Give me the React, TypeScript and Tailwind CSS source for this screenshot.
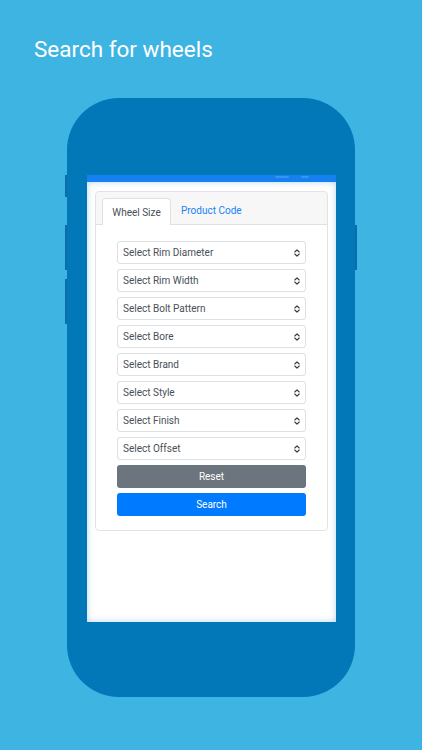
const selects = [
  "Select Rim Diameter",
  "Select Rim Width",
  "Select Bolt Pattern",
  "Select Bore",
  "Select Brand",
  "Select Style",
  "Select Finish",
  "Select Offset",
];

function UpDown() {
  return (
    <svg width="8" height="10" viewBox="0 0 8 10" fill="none" stroke="#343a40" strokeWidth="1.1" strokeLinecap="round" strokeLinejoin="round">
      <path d="M1.8 4 L4 1.8 L6.2 4" />
      <path d="M1.8 6 L4 8.2 L6.2 6" />
    </svg>
  );
}

function Phone() {
  return (
    <div className="relative ml-[67px] mt-[36px] w-[288px] h-[599px] rounded-[52px] bg-[#0278b8]">
      {/* side buttons */}
      <div className="absolute left-[-2px] top-[77px] w-[2px] h-[22px] bg-[#0a6fa8]" />
      <div className="absolute left-[-2px] top-[127px] w-[2px] h-[45px] bg-[#0a6fa8]" />
      <div className="absolute left-[-2px] top-[181px] w-[2px] h-[45px] bg-[#0a6fa8]" />
      <div className="absolute right-[-2px] top-[127px] w-[2px] h-[45px] bg-[#0a6fa8]" />

      <div className="absolute left-[20px] top-[77px] w-[249px] h-[447px] bg-white flex flex-col overflow-hidden">
        <div className="relative h-[7px] bg-[#1580f2] shrink-0">
          <div className="absolute left-[188px] top-[1px] w-[14px] h-[2px] rounded bg-white/15" />
          <div className="absolute left-[214px] top-[1px] w-[8px] h-[2px] rounded bg-white/15" />
        </div>
        <div className="flex-1 shadow-[inset_0_0_6px_rgba(40,130,210,0.35)] px-[8px] pt-[9px]">
          <div className="rounded-[4px] border border-[#e3e3e3] bg-white" style={{ fontFamily: "Roboto, 'Liberation Sans', sans-serif" }}>
            <div className="h-[33px] bg-[#f7f7f7] border-b border-[#e0e0e0] flex items-end pl-[6px] rounded-t-[4px]">
              <div className="h-[27px] w-[69px] bg-white border border-b-0 border-[#e0e0e0] rounded-t-[4px] flex items-center justify-center text-[10px] text-[#495057] -mb-px">
                Wheel Size
              </div>
              <div className="h-[27px] px-[10px] flex items-center text-[10px] text-[#1a82f5]">
                Product Code
              </div>
            </div>
            <div className="px-[21px] pt-[16px] pb-[14px] flex flex-col gap-[5px]">
              {selects.map((s) => (
                <div key={s} className="h-[23px] rounded-[3px] border border-[#dcdfe3] flex items-center justify-between pl-[5px] pr-[4px] text-[10px] text-[#495057]">
                  <span>{s}</span>
                  <UpDown />
                </div>
              ))}
              <div className="h-[23px] rounded-[3px] bg-[#6c757d] flex items-center justify-center text-[10px] text-white">
                Reset
              </div>
              <div className="h-[23px] rounded-[3px] bg-[#007bff] flex items-center justify-center text-[10px] text-white">
                Search
              </div>
            </div>
          </div>
        </div>
      </div>
    </div>
  );
}

export default function App() {
  return (
    <div className="w-[422px] h-[750px] bg-[#3eb4e3] overflow-hidden flex flex-col">
      <h1 className="pl-[34px] pt-[36px] text-[22.5px] leading-[26px] text-white" style={{ fontFamily: "Roboto, sans-serif" }}>
        Search for wheels
      </h1>
      <Phone />
    </div>
  );
}
